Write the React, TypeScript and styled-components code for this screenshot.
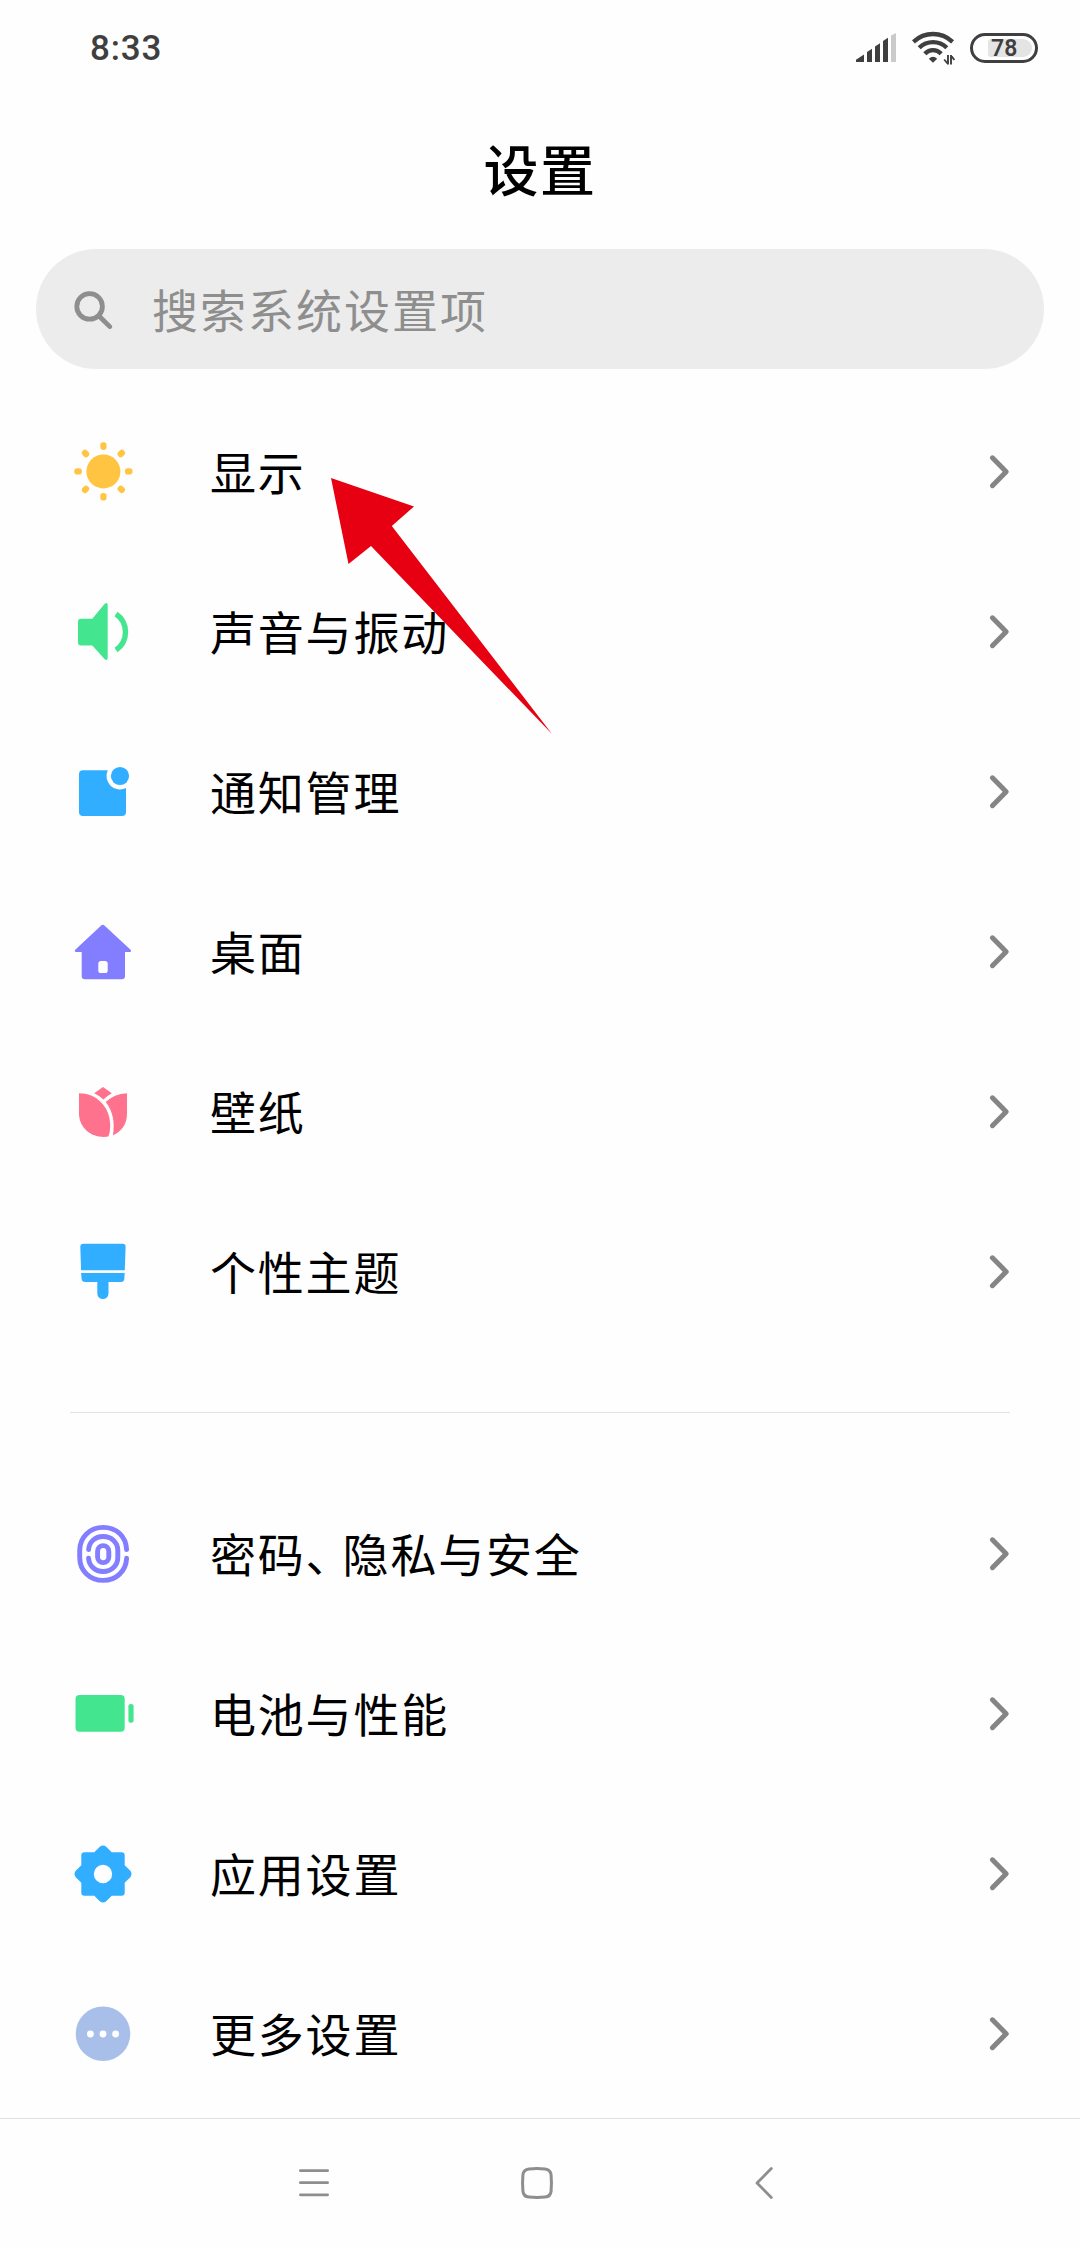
import React from "react";
import styled, { createGlobalStyle } from "styled-components";

const GlobalStyle = createGlobalStyle`
  * { box-sizing: border-box; }
  body {
    margin: 0;
    background: #fefefe;
    font-family: Roboto, "Noto Sans CJK SC", sans-serif;
  }
  svg { display: block; flex: none; }
`;

const Screen = styled.div`
  position: relative;
  width: 1080px;
  height: 2248px;
  display: flex;
  flex-direction: column;
  background: #fefefe;
  overflow: hidden;
`;

const StatusBar = styled.header`
  height: 98px;
  display: flex;
  align-items: center;
  justify-content: space-between;
  padding: 0 42px 2px 90px;
`;

const Clock = styled.span`
  padding-top: 1px;
  font-size: 35px;
  line-height: 40px;
  font-weight: 500;
  letter-spacing: 0.8px;
  color: #3f3f3f;
`;

const StatusIcons = styled.div`
  display: flex;
  align-items: center;
  gap: 15px;
  height: 34px;
`;

const Battery = styled.div`
  width: 68px;
  height: 30px;
  border: 3px solid #3f3f3f;
  border-radius: 15px;
  padding: 3px 3px 3px 15px;
`;

const BatteryLevel = styled.div`
  height: 18px;
  border-radius: 3px 9px 9px 3px;
  background: #e4e4e4;
  padding-left: 3px;
  font-size: 23px;
  line-height: 19px;
  font-weight: 600;
  color: #3f3f3f;
`;

const Title = styled.h1`
  margin: 0;
  height: 151px;
  padding-top: 29px;
  text-align: center;
  font-family: "Noto Sans CJK SC", sans-serif;
  font-size: 55px;
  line-height: 80px;
  font-weight: 500;
  letter-spacing: 1.5px;
  color: #000;
`;

const SearchBar = styled.div`
  height: 120px;
  margin: 0 36px;
  border-radius: 60px;
  background: #ececec;
  display: flex;
  align-items: center;
  gap: 36px;
  padding: 0 36px;
`;

const Placeholder = styled.span`
  padding-bottom: 3px;
  font-family: "Noto Sans CJK SC", sans-serif;
  font-size: 46px;
  line-height: 68px;
  letter-spacing: 2px;
  color: #8e8e8e;
`;

const List = styled.main`
  flex: 1;
  padding: 23px 70px 0 68px;
`;

const Row = styled.div`
  height: 160px;
  display: flex;
  align-items: center;
`;

const Label = styled.span`
  flex: 1;
  margin-left: 70px;
  padding-bottom: 4px;
  font-family: "Noto Sans CJK SC", sans-serif;
  font-size: 46px;
  line-height: 68px;
  letter-spacing: 1.8px;
  color: #000;
`;

const Comma = styled.span`
  letter-spacing: -9px;
`;

const Divider = styled.hr`
  height: 1px;
  border: 0;
  margin: 60px 0 61px 2px;
  background: #e2e2e2;
`;

const NavBar = styled.nav`
  height: 130px;
  border-top: 1px solid #e0e0e0;
  display: flex;
  align-items: center;
  padding: 0 0 2px 296px;
`;

const NavButton = styled.div<{ $gap?: number }>`
  width: 36px;
  height: 36px;
  margin-right: ${(p) => p.$gap ?? 0}px;
`;

const Pointer = styled.svg`
  position: absolute;
  left: 331px;
  top: 478px;
`;

const Glyph = ({ color, children }: { color: string; children: React.ReactNode }) => (
  <svg width="72" height="72" viewBox="0 0 72 72" fill={color}>
    {children}
  </svg>
);

const SunIcon = () => (
  <Glyph color="#ffc542">
    <circle cx="35.4" cy="35.4" r="17" />
    {[0, 45, 90, 135, 180, 225, 270, 315].map((a) => (
      <rect key={a} x="32.3" y="6.3" width="6.2" height="7.6" rx="2.8" transform={`rotate(${a} 35.4 35.4)`} />
    ))}
  </Glyph>
);

const SoundIcon = () => (
  <Glyph color="#43e68f">
    <path d="M13 22.7H24.3L36.5 8Q39.7 5.6 39.7 9.5V61.5Q39.7 65.4 36.5 63L24.3 49.4H13Q10 49.4 10 46.4V25.7Q10 22.7 13 22.7Z" />
    <path d="M48 18A21.8 21.8 0 0 1 48 54" fill="none" stroke="#43e68f" strokeWidth="5.4" />
  </Glyph>
);

const NoticeIcon = () => (
  <Glyph color="#31aeff">
    <path d="M15 14.2H39.8A13.5 13.5 0 0 0 58 32.1V56Q58 60 54 60H15Q11 60 11 56V18.2Q11 14.2 15 14.2Z" />
    <circle cx="52" cy="20" r="9.1" />
  </Glyph>
);

const HomeIcon = () => (
  <Glyph color="#827eff">
    <path
      fillRule="evenodd"
      d="M33.2 9.4Q34.8 8 36.4 9.4L62.3 33.5Q64.2 36 61.5 36H57V60Q57 63.3 53.7 63.3H17Q13.7 63.3 13.7 60V36H8.5Q5.6 36 7.5 33.5ZM33 45Q30.3 45 30.3 47.6V54.4Q30.3 57 33 57H37Q39.7 57 39.7 54.4V47.6Q39.7 45 37 45Z"
    />
  </Glyph>
);

const TulipIcon = () => (
  <Glyph color="#ff728e">
    <path d="M35 11L43.8 17.3Q39 20 35.4 23.5Q31.5 19.8 26.2 17.3Z" />
    <path d="M11 17.2C28 17.2 42.2 30 42.2 50Q42.2 56 40.4 60.6C24 63 11 52 11 37.5Z" />
    <path d="M59 17.2V38C59 48 53.5 55.5 45 59.3C46.8 47 45.5 36 37.7 26Q46 17.8 59 17.2Z" />
  </Glyph>
);

const BrushIcon = () => (
  <Glyph color="#31aeff">
    <path d="M15.3 7.8H54.7Q57.7 7.8 57.6 10.8L56.8 34.3H13.1L12.3 10.8Q12.3 7.8 15.3 7.8Z" />
    <path d="M13.1 37.1H56.7L56.3 43Q56 46 53 46H40.5V57.5A5.6 5.6 0 0 1 29.3 57.5V46H17Q14 46 13.6 43Z" />
  </Glyph>
);

const FingerprintIcon = () => (
  <Glyph color="none">
    <g stroke="#827eff" strokeWidth="4.9" strokeLinecap="round">
      <path d="M58.6 31.6C58 18.5 48.5 9.4 35.2 9.4S11.7 19 11.7 32.5V39.2C11.7 53 22 62.4 35.2 62.4S58 53 58.6 40.3" />
      <path d="M20.6 31.6C21 24.3 27 18.5 35.2 18.5S49.8 24.5 49.8 32.2V39.5C49.8 47.5 43.4 53.5 35.2 53.5S21 47.5 20.6 40.3" />
      <rect x="29.6" y="27.6" width="11.2" height="17" rx="5.6" />
    </g>
  </Glyph>
);

const BatteryIcon = () => (
  <Glyph color="#43e68f">
    <rect x="7.5" y="17" width="49.2" height="36.7" rx="4" />
    <rect x="60.4" y="26" width="5.2" height="18.7" rx="2.2" />
  </Glyph>
);

const GearIcon = () => (
  <Glyph color="#31aeff">
    <path
      fillRule="evenodd"
      d="M31.8 8.7Q35 6.3 38.2 8.7L43.7 14.3H53.5Q56.7 14.3 56.7 17.5V27.3L62.3 32.8Q64.7 36 62.3 39.2L56.7 44.7V54.5Q56.7 57.7 53.5 57.7H43.7L38.2 63.3Q35 65.7 31.8 63.3L26.3 57.7H16.5Q13.3 57.7 13.3 54.5V44.7L7.7 39.2Q5.3 36 7.7 32.8L13.3 27.3V17.5Q13.3 14.3 16.5 14.3H26.3ZM35 26.8A9.2 9.2 0 1 0 35 45.2A9.2 9.2 0 1 0 35 26.8Z"
    />
  </Glyph>
);

const MoreIcon = () => (
  <Glyph color="#a8bfea">
    <circle cx="35" cy="35.8" r="27.3" />
    <g fill="#fff">
      <circle cx="22.4" cy="36" r="3.4" />
      <circle cx="35" cy="36" r="3.4" />
      <circle cx="47.6" cy="36" r="3.4" />
    </g>
  </Glyph>
);

const Chevron = () => (
  <svg width="24" height="40" viewBox="0 0 24 40" fill="none" stroke="#858585" strokeWidth="5" strokeLinecap="round" strokeLinejoin="round">
    <path d="M6.4 5.8L20.2 19.7L6.4 33.7" />
  </svg>
);

const SignalIcon = () => (
  <svg width="41" height="30" viewBox="0 0 41 30" fill="#3f3f3f">
    <path d="M0 29V26.8L8 21.5V29Z" />
    <path d="M11 29V19L16 15.7V29Z" />
    <path d="M19 29V13.5L24 10.3V29Z" />
    <path d="M27 29V8L32 4.7V29Z" />
    <path d="M35 29V2.5L40 0V29Z" fill="#cacaca" />
  </svg>
);

const WifiIcon = () => (
  <svg width="43" height="34" viewBox="0 0 43 34" fill="none" stroke="#3f3f3f" strokeWidth="4.3">
    <path d="M1.4 10.8Q10 3 21 3T40.6 10.8" />
    <path d="M7.2 16.8Q13 11.1 21 11.1T34.8 16.8" />
    <path d="M12.8 22.7Q16.3 19.1 21 19.1T29.2 22.7" />
    <path d="M16.8 27.8Q21 23.6 25.2 27.8L21 31.8Z" fill="#3f3f3f" stroke="none" />
    <path d="M36 24V33.5M36 33L32.2 28.5M39 33.5V24M39 24.5L42.4 29" strokeWidth="1.9" />
  </svg>
);

const primary = [
  { icon: <SunIcon />, label: "显示" },
  { icon: <SoundIcon />, label: "声音与振动" },
  { icon: <NoticeIcon />, label: "通知管理" },
  { icon: <HomeIcon />, label: "桌面" },
  { icon: <TulipIcon />, label: "壁纸" },
  { icon: <BrushIcon />, label: "个性主题" },
];

const secondary = [
  { icon: <FingerprintIcon />, label: <>密码<Comma>、</Comma>隐私与安全</> },
  { icon: <BatteryIcon />, label: "电池与性能" },
  { icon: <GearIcon />, label: "应用设置" },
  { icon: <MoreIcon />, label: "更多设置" },
];

const SettingRow = ({ icon, label }: { icon: React.ReactNode; label: React.ReactNode }) => (
  <Row>
    {icon}
    <Label>{label}</Label>
    <Chevron />
  </Row>
);

export default function App() {
  return (
    <>
      <GlobalStyle />
      <Screen>
        <StatusBar>
          <Clock>8:33</Clock>
          <StatusIcons>
            <SignalIcon />
            <WifiIcon />
            <Battery>
              <BatteryLevel>78</BatteryLevel>
            </Battery>
          </StatusIcons>
        </StatusBar>
        <Title>设置</Title>
        <SearchBar>
          <svg width="44" height="44" viewBox="0 0 44 44" fill="none" stroke="#8e8e8e" strokeWidth="4.8" strokeLinecap="round">
            <circle cx="17.6" cy="19.4" r="12.8" />
            <path d="M27 29L37.8 39.6" />
          </svg>
          <Placeholder>搜索系统设置项</Placeholder>
        </SearchBar>
        <List>
          {primary.map((item, i) => (
            <SettingRow key={i} {...item} />
          ))}
          <Divider />
          {secondary.map((item, i) => (
            <SettingRow key={i} {...item} />
          ))}
        </List>
        <NavBar>
          <NavButton $gap={187}>
            <svg width="36" height="36" viewBox="0 0 36 36" stroke="#8e8e8e" strokeWidth="2.8" strokeLinecap="round">
              <path d="M4.4 5.7H31.6M4.4 17.7H31.6M4.4 29.8H31.6" />
            </svg>
          </NavButton>
          <NavButton $gap={192}>
            <svg width="36" height="36" viewBox="0 0 36 36" fill="none" stroke="#8e8e8e" strokeWidth="3">
              <path d="M10 3.9Q18 3.2 26 3.9Q31.6 4.4 32.1 10Q32.8 18 32.1 26Q31.6 31.6 26 32.1Q18 32.8 10 32.1Q4.4 31.6 3.9 26Q3.2 18 3.9 10Q4.4 4.4 10 3.9Z" />
            </svg>
          </NavButton>
          <NavButton>
            <svg width="36" height="36" viewBox="0 0 36 36" fill="none" stroke="#8e8e8e" strokeWidth="2.8" strokeLinecap="round" strokeLinejoin="round">
              <path d="M24.3 3.6L10 18L24.3 32.5" />
            </svg>
          </NavButton>
        </NavBar>
        <Pointer width="222" height="258" viewBox="0 0 222 258" fill="#e60012">
          <path d="M0 0L83 28.5L60.8 48L221 256L40 68L17.5 86Z" />
        </Pointer>
      </Screen>
    </>
  );
}
